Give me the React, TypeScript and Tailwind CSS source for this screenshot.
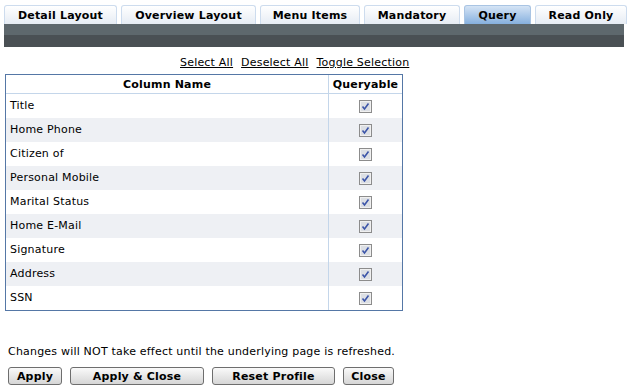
import React from "react";

const tabs = ["Detail Layout", "Overview Layout", "Menu Items", "Mandatory", "Query", "Read Only"];
const tabW = [113, 135, 100, 96, 67, 92];
const rows = ["Title", "Home Phone", "Citizen of", "Personal Mobile", "Marital Status", "Home E-Mail", "Signature", "Address", "SSN"];

function Check() {
  return (
    <svg width="13" height="13" viewBox="0 0 13 13">
      <rect x="0.5" y="0.5" width="12" height="12" fill="#dcdfe4" stroke="#8c8c8c" />
      <rect x="1.5" y="1.5" width="10" height="10" fill="none" stroke="#f0f0f0" />
      <path d="M3.5 6.5 L5.5 9 L9.5 3.5" fill="none" stroke="#3c55a8" strokeWidth="1.6" />
    </svg>
  );
}

function Btn({ label, w }: { label: string; w: number }) {
  return (
    <button
      className="h-[18px] rounded-[3px] border border-[#6e6e6e] bg-gradient-to-b from-[#fafafa] to-[#d6d6d6] text-[11px] font-bold text-black leading-none tracking-[0.2px]"
      style={{ width: w }}
    >
      {label}
    </button>
  );
}

export default function App() {
  return (
    <div className="w-[628px] h-[389px] bg-white text-black text-[11px] tracking-[0.2px]" style={{ fontFamily: "Verdana, 'DejaVu Sans', sans-serif" }}>
      <div className="flex gap-[4px] pl-[4px] pt-[5px] h-[24px] items-end">
        {tabs.map((t, i) => (
          <div
            key={t}
            className={
              "h-[19px] pt-[3px] rounded-t-[3px] border border-b-0 flex items-center justify-center font-bold text-[11px] " +
              (t === "Query"
                ? "border-[#a9c4e3] bg-gradient-to-b from-[#d5e4f5] to-[#86b0de]"
                : "border-[#cddcee] bg-gradient-to-b from-[#ffffff] to-[#e6ecf4]")
            }
            style={{ width: tabW[i] }}
          >
            {t}
          </div>
        ))}
      </div>
      <div className="mx-[4px] h-[23px] flex flex-col">
        <div className="h-[11px] bg-[#5e686d]" />
        <div className="h-[12px] bg-[#4a5054]" />
      </div>
      <div className="flex gap-[8px] pl-[180px] mt-[9px] h-[14px] items-center">
        <span className="underline">Select All</span>
        <span className="underline">Deselect All</span>
        <span className="underline">Toggle Selection</span>
      </div>
      <div className="ml-[5px] mt-[4px] w-[398px] border border-[#5577a6]">
        <div className="flex h-[19px] border-b border-[#c4d6ea] font-bold">
          <div className="w-[323px] pt-[2px] flex items-center justify-center border-r border-[#c4d6ea]">Column Name</div>
          <div className="flex-1 pt-[2px] flex items-center justify-center">Queryable</div>
        </div>
        {rows.map((r, i) => (
          <div key={r} className={"flex h-[24px] " + (i % 2 === 1 ? "bg-[#eef0f4]" : "bg-white")}>
            <div className="w-[323px] flex items-center pl-[4px] border-r border-[#c4d6ea]">{r}</div>
            <div className="flex-1 flex items-center justify-center">
              <Check />
            </div>
          </div>
        ))}
      </div>
      <div className="pl-[8px] mt-[34px] h-[14px] flex items-center">Changes will NOT take effect until the underlying page is refreshed.</div>
      <div className="flex gap-[8px] pl-[8px] mt-[8px]">
        <Btn label="Apply" w={54} />
        <Btn label="Apply & Close" w={134} />
        <Btn label="Reset Profile" w={123} />
        <Btn label="Close" w={51} />
      </div>
    </div>
  );
}
